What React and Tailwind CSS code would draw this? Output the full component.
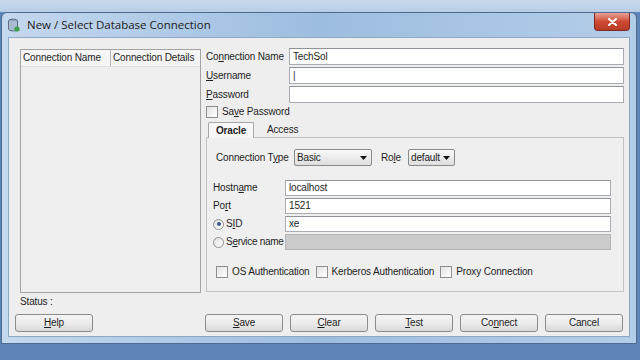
import React from 'react';

// mnemonic label: underlines one letter like a Swing dialog
const Mn = ({ text, at }) => {
  if (at < 0) return <span>{text}</span>;
  return (
    <span>
      {text.slice(0, at)}
      <span className="underline underline-offset-[1px]">{text[at]}</span>
      {text.slice(at + 1)}
    </span>
  );
};

const TextBox = ({ value, className = '', disabled }) => (
  <div
    className={`border flex items-center px-[3px] min-w-0 ${
      disabled ? 'bg-[#cbcbcb] border-[#b5b5b5]' : 'bg-white border-[#a8abb2] border-t-[#8e9299]'
    } ${className}`}
  >
    {value}
  </div>
);

const CheckBox = ({ label, at = -1 }) => (
  <div className="flex items-center gap-[4px] shrink-0">
    <div className="w-[12px] h-[12px] border border-[#8f8f8f] bg-gradient-to-br from-[#e4e4e4] to-white shrink-0"></div>
    <Mn text={label} at={at} />
  </div>
);

const Radio = ({ label, at, checked }) => (
  <div className="flex items-center gap-[2px]">
    <div className="w-[11px] h-[11px] rounded-full border border-[#8f8f8f] bg-gradient-to-br from-[#e0e0e0] to-white flex items-center justify-center shrink-0">
      {checked && <div className="w-[4px] h-[4px] rounded-full bg-[#3a5a8a]"></div>}
    </div>
    <Mn text={label} at={at} />
  </div>
);

const Select = ({ value, className = '' }) => (
  <div
    className={`h-[17px] border border-[#8a8a8a] rounded-[2px] bg-gradient-to-b from-[#fafafa] to-[#dedede] flex items-center justify-between pl-[2px] pr-[4px] shrink-0 ${className}`}
  >
    <span>{value}</span>
    <svg width="7" height="4" viewBox="0 0 7 4">
      <path d="M0 0 L7 0 L3.5 4 Z" fill="#111" />
    </svg>
  </div>
);

const Button = ({ label, at, className = '' }) => (
  <div
    className={`w-[78px] h-[18px] border border-[#8c8c8c] rounded-[3px] bg-gradient-to-b from-[#f4f4f4] via-[#ececec] to-[#d9d9d9] flex items-center justify-center shrink-0 ${className}`}
  >
    <Mn text={label} at={at} />
  </div>
);

export default function App() {
  return (
    <div
      className="w-[640px] h-[360px] overflow-hidden bg-[#5d84b6] flex flex-col text-[10px] tracking-[-0.15px] leading-none whitespace-nowrap text-[#1e1e1e]"
      style={{ fontFamily: '"Liberation Sans", Arial, sans-serif' }}
    >
      <div className="h-[12px] bg-gradient-to-b from-[#c9daec] to-[#b7cde5] shrink-0"></div>

      {/* window */}
      <div className="mx-[1px] w-[636px] h-[332px] rounded-t-[6px] border border-[#4e6a8e] bg-gradient-to-r from-[#c4d8ee] via-[#9dbde0] to-[#b4cde8] flex flex-col shrink-0">
        {/* title bar */}
        <div className="h-[24px] flex items-center relative shrink-0">
          <svg width="12" height="14" viewBox="0 0 12 14" className="ml-[6px]">
            <ellipse cx="5" cy="3" rx="4.5" ry="2" fill="#8fa4bd" stroke="#4a5b70" strokeWidth="0.8" />
            <path d="M0.5 3 V11 A4.5 2 0 0 0 9.5 11 V3" fill="#a9bbd0" stroke="#4a5b70" strokeWidth="0.8" />
            <circle cx="9" cy="11" r="2.6" fill="#3aa04a" />
          </svg>
          <span className="ml-[7px] text-[11.5px] tracking-normal text-[#1a1a1a]" style={{ fontFamily: '"Open Sans", "Liberation Sans", sans-serif' }}>
            New / Select Database Connection
          </span>
          <div className="absolute right-[6px] top-0 w-[36px] h-[18px] rounded-b-[4px] border border-[#7a2a20] border-t-0 bg-gradient-to-b from-[#e8a195] via-[#cf4a33] to-[#b83a25] flex items-center justify-center">
            <svg width="9" height="8" viewBox="0 0 9 8">
              <path d="M1 1 L8 7 M8 1 L1 7" stroke="white" strokeWidth="2" strokeLinecap="round" />
            </svg>
          </div>
        </div>

        {/* client area */}
        <div className="mx-[6px] h-[300px] bg-[#eeeeee] border border-[#8ea7c4] flex flex-col pl-[11px] pr-[3px] pt-[10px]">
          <div className="flex gap-[5px] h-[245px]">
            {/* connection list */}
            <div className="w-[181px] h-[244px] mt-[1px] border border-[#a3a3a3] bg-[#efefef] flex flex-col shrink-0">
              <div className="h-[17px] flex bg-[#f5f5f5] border-b border-[#dedede]">
                <div className="w-[90px] border-r border-[#b8b8b8] flex items-center pl-[2px]">Connection Name</div>
                <div className="flex-1 flex items-center pl-[2px]">Connection Details</div>
              </div>
            </div>

            {/* form */}
            <div className="w-[418px] flex flex-col shrink-0">
              <div className="flex flex-col gap-[2px]">
                <div className="flex items-center">
                  <div className="w-[83px] shrink-0"><Mn text="Connection Name" at={2} /></div>
                  <TextBox value="TechSol" className="flex-1 h-[17px]" />
                </div>
                <div className="flex items-center">
                  <div className="w-[83px] shrink-0"><Mn text="Username" at={0} /></div>
                  <TextBox value={<span className="text-[#333]">|</span>} className="flex-1 h-[17px]" />
                </div>
                <div className="flex items-center">
                  <div className="w-[83px] shrink-0"><Mn text="Password" at={0} /></div>
                  <TextBox value="" className="flex-1 h-[17px]" />
                </div>
              </div>
              <div className="mt-[2px] h-[13px] flex items-center">
                <CheckBox label="Save Password" at={2} />
              </div>

              {/* tabs */}
              <div className="mt-[3px] flex items-end h-[16px] pl-[2px]">
                <div className="h-[16px] w-[46px] border border-[#a6a6a6] border-b-0 bg-[#f7f7f7] rounded-t-[2px] flex items-center justify-center font-bold -mb-[1px] relative z-10">
                  Oracle
                </div>
                <div className="ml-[13px] h-[14px] flex items-center">Access</div>
              </div>
              <div className="h-[155px] border border-[#c3c3c3] bg-[#efefef] flex flex-col pl-[6px] pr-[12px]">
                <div className="mt-[11px] flex items-center pl-[3px]">
                  <span className="w-[78px] shrink-0"><Mn text="Connection Type" at={12} /></span>
                  <Select value="Basic" className="w-[78px]" />
                  <span className="ml-[9px] w-[27px] shrink-0"><Mn text="Role" at={2} /></span>
                  <Select value="default" className="w-[47px]" />
                </div>

                <div className="mt-[14px] flex flex-col gap-[2px]">
                  <div className="flex items-center">
                    <span className="w-[72px] shrink-0"><Mn text="Hostname" at={5} /></span>
                    <TextBox value="localhost" className="flex-1 h-[16px]" />
                  </div>
                  <div className="flex items-center">
                    <span className="w-[72px] shrink-0"><Mn text="Port" at={2} /></span>
                    <TextBox value="1521" className="flex-1 h-[16px]" />
                  </div>
                  <div className="flex items-center">
                    <span className="w-[72px] shrink-0"><Radio label="SID" at={1} checked /></span>
                    <TextBox value="xe" className="flex-1 h-[16px]" />
                  </div>
                  <div className="flex items-center">
                    <span className="w-[72px] shrink-0 tracking-[-0.3px]"><Radio label="Service name" at={1} /></span>
                    <TextBox value="" disabled className="flex-1 h-[16px]" />
                  </div>
                </div>

                <div className="mt-[16px] flex items-center gap-[6px] pl-[3px]">
                  <CheckBox label="OS Authentication" />
                  <CheckBox label="Kerberos Authentication" />
                  <CheckBox label="Proxy Connection" />
                </div>
              </div>
            </div>
          </div>

          <div className="mt-[3px] h-[12px] flex items-center">Status :</div>

          <div className="mt-[6px] flex">
            <Button label="Help" at={0} className="-ml-[5px]" />
            <div className="ml-auto flex gap-[7px] mr-[3px]">
              <Button label="Save" at={0} />
              <Button label="Clear" at={0} />
              <Button label="Test" at={0} />
              <Button label="Connect" at={2} />
              <Button label="Cancel" at={-1} />
            </div>
          </div>
        </div>
      </div>
    </div>
  );
}
